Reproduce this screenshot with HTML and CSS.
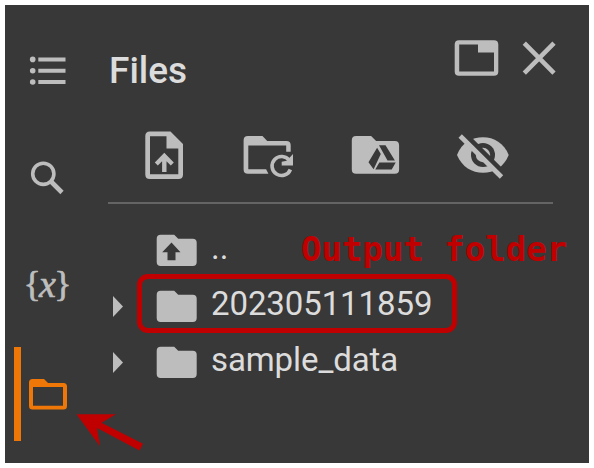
FILE: index.html
```html
<!DOCTYPE html>
<html lang="en">
<head>
<meta charset="utf-8">
<title>Files</title>
<link rel="stylesheet" href="styles.css">
</head>
<body>
<div class="panel">
  <nav class="rail">
    <div class="rail-item">
      <svg width="48" height="94" viewBox="24 23 48 94"><circle cx="32.7" cy="59.4" r="2.8"/><circle cx="32.7" cy="70.7" r="2.8"/><circle cx="32.7" cy="82" r="2.8"/><path d="M38.300 57.500h27.200v3.900H38.300zM38.300 68.800h27.200v3.900H38.300zM38.300 80.100h27.200v3.900H38.300z"/></svg>
    </div>
    <div class="rail-item">
      <svg width="48" height="94" viewBox="24 131 48 94"><g fill="none" stroke="#bdbdbd"><circle cx="43.3" cy="173.8" r="10.6" stroke-width="3.6"/><path d="M51 181.500L62 192.500" stroke-width="4.6"/></g></svg>
    </div>
    <div class="rail-item variables"><span>{</span><i>x</i><span>}</span></div>
    <div class="rail-item active">
      <svg width="48" height="94" viewBox="24 347 48 94"><path fill-rule="evenodd" d="M32.500 379h11.500l4 4h15.500q3.500 0 3.500 3.500v19.500q0 3.500-3.500 3.500h-31q-3.500 0-3.500-3.500v-23.500q0-3.500 3.500-3.500zM33 387v18.700h30V387z"/></svg>
    </div>
  </nav>
  <main class="content">
    <header class="header">
      <h1>Files</h1>
      <svg width="62" height="115" viewBox="446 5 62 115"><path fill-rule="evenodd" d="M459 40.300h35q4.300 0 4.300 4.300v26.900q0 4.300-4.300 4.300h-35q-4.300 0-4.300-4.300V44.600q0-4.300 4.300-4.300zM459.200 44.400v27.200H494V52.400h-16v-8z"/></svg>
      <svg width="45" height="115" viewBox="508 5 45 115"><path d="M524.300 43.200l29.700 30M554 43.200l-29.700 30" fill="none" stroke="#bdbdbd" stroke-width="4.600"/></svg>
    </header>
    <div class="toolbar">
      <svg width="60" height="82" viewBox="134 120 60 82"><path fill-rule="evenodd" d="M149.800 131.500h20.700l12.500 12.500v30.500q0 4.500-4.500 4.500h-28.700q-4.500 0-4.500-4.500V136q0-4.500 4.500-4.500zM150 136.300v37.900h28.300V148.500h-11.800v-12.200z"/><path d="M164.300 152.800l9.500 9.800-3 3-4.300-4.300V172h-4.400v-10.700l-4.300 4.300-3-3z"/></svg>
      <svg width="60" height="82" viewBox="240.300 120 60 82"><path d="M248.200 136h14.600l4.700 5h19.200q4.300 0 4.300 4.300v6.500h-4.500v-6.300h-37.900v23.700h17.800l2.300 4.600h-20.500q-4.300 0-4.300-4.300v-29.200q0-4.300 4.300-4.300z"/><path d="M289.600 160.500A9.500 9.500 0 1 0 290.700 169.500" fill="none" stroke="#bdbdbd" stroke-width="3.600"/><path d="M293.300 154v11.500h-11.300v-3.800l5-1z"/></svg>
      <svg width="60" height="82" viewBox="346.700 120 60 82"><path d="M355.800 136h15l5 5h18.700q4.300 0 4.300 4.300v24.200q0 4.300-4.300 4.300h-38.700q-4.300 0-4.300-4.300v-29.200q0-4.300 4.300-4.300z"/><path class="cutout" d="M378.700 145.300h6.500l9.400 15.300h-7.400zM376.800 147.700l3.700 6.300-7.200 15.300-5.100-7.100zM379 162.500h16.400l-4 7H375z"/></svg>
      <svg width="60" height="82" viewBox="453 120 60 82"><path d="M457 155C462 142 472 137.200 483 137.200S504 143 508.700 155C504 167 494 172.800 483 172.800S462 167 457 155z"/><circle class="cutout" cx="483" cy="155" r="12"/><circle cx="483" cy="155" r="7.200"/><path d="M463.700 133.100L504.700 174" fill="none" stroke="#383838" stroke-width="5"/><path d="M460.200 136L501.500 177" fill="none" stroke="#bdbdbd" stroke-width="4.800"/></svg>
    </div>
    <div class="files">
      <div class="row">
        <span class="toggle"></span>
        <svg width="40" height="56" viewBox="157 222 40 56"><path d="M160.700 234.700h13.500l4 4H192.700q4 0 4 4V262q0 4-4 4h-32q-4 0-4-4v-23.300q0-4 4-4z"/><path class="cutout" d="M171.500 242.500l9 9.700h-5v8h-8v-8h-5.300z"/></svg>
        <span class="name">..</span>
        <span class="note">Output folder</span>
      </div>
      <div class="row">
        <span class="toggle closed"></span>
        <svg width="40" height="56" viewBox="157 222 40 56"><path d="M160.700 234.700h13.500l4 4H192.700q4 0 4 4V262q0 4-4 4h-32q-4 0-4-4v-23.300q0-4 4-4z"/></svg>
        <span class="name digits">202305111859</span>
        <span class="highlight"></span>
      </div>
      <div class="row">
        <span class="toggle closed"></span>
        <svg width="40" height="56" viewBox="157 222 40 56"><path d="M160.700 234.700h13.500l4 4H192.700q4 0 4 4V262q0 4-4 4h-32q-4 0-4-4v-23.300q0-4 4-4z"/></svg>
        <span class="name sample">sample_data</span>
      </div>
    </div>
  </main>
  <svg class="pointer" width="70" height="40" viewBox="75 412 70 40"><path d="M76.500 414.300H116l-14.500 8.400 41.500 21-3.500 6.700-42.500-22.400 3 18.300z"/></svg>
</div>
</body>
</html>
```

FILE: styles.css
```css
* { box-sizing: border-box; }
body {
  margin: 0;
  padding: 5px;
  background: #fff;
  font-family: Roboto, "Liberation Sans", sans-serif;
}
svg { display: block; flex: none; fill: #bdbdbd; overflow: visible; }
.cutout { fill: #383838; }
.panel {
  position: relative;
  display: flex;
  width: 584px;
  height: 458px;
  background: #383838;
  color: #dcdcdc;
}
.rail {
  display: flex;
  flex-direction: column;
  gap: 14px;
  width: 103px;
  padding: 18px 0 0 9px;
}
.rail-item {
  display: flex;
  align-items: center;
  width: 60px;
  height: 94px;
  padding-left: 3px;
  border-left: 7px solid transparent;
}
.rail-item.active { border-color: #ee7708; }
.active svg { fill: #ee7708; }
.variables {
  justify-content: center;
  padding: 0 0 4px 0;
  color: #bdbdbd;
  font: 36px/1 "Liberation Serif", serif;
  -webkit-text-stroke: 0.7px #bdbdbd;
}
.variables span { width: 12px; display: flex; justify-content: center; }
.variables i { font-size: 38px; padding: 0 1px; }
.content { width: 445px; }
.header { display: flex; height: 115px; }
.header h1 {
  flex: 1;
  margin: 0;
  padding: 44px 0 0 1px;
  font-size: 37px;
  line-height: 44px;
  font-weight: 500;
}
.toolbar {
  display: flex;
  justify-content: space-between;
  height: 84px;
  padding: 0 40px 0 26px;
  border-bottom: 2px solid #646464;
}
.files { padding-top: 18px; }
.row { position: relative; display: flex; height: 56px; }
.toggle { width: 49px; padding: 17px 0 0 5px; }
.closed::before {
  content: "";
  display: block;
  width: 10px;
  height: 21px;
  margin-top: 1px;
  background: #bdbdbd;
  clip-path: polygon(0 0, 100% 50%, 0 100%);
}
.name {
  padding-left: 14px;
  font-size: 33px;
  line-height: 52px;
  white-space: nowrap;
}
.digits { letter-spacing: -0.1px; }
.sample { letter-spacing: -0.1px; }
.note {
  position: absolute;
  left: 193px;
  top: 0;
  color: #c00000;
  font: bold 34px/54px "DejaVu Sans Mono", monospace;
  white-space: pre;
}
.highlight {
  position: absolute;
  left: 29px;
  top: -4px;
  width: 320px;
  height: 59px;
  border: 5px solid #c00000;
  border-radius: 11px;
}
.pointer { position: absolute; left: 70px; top: 407px; fill: #c00000; }
```
